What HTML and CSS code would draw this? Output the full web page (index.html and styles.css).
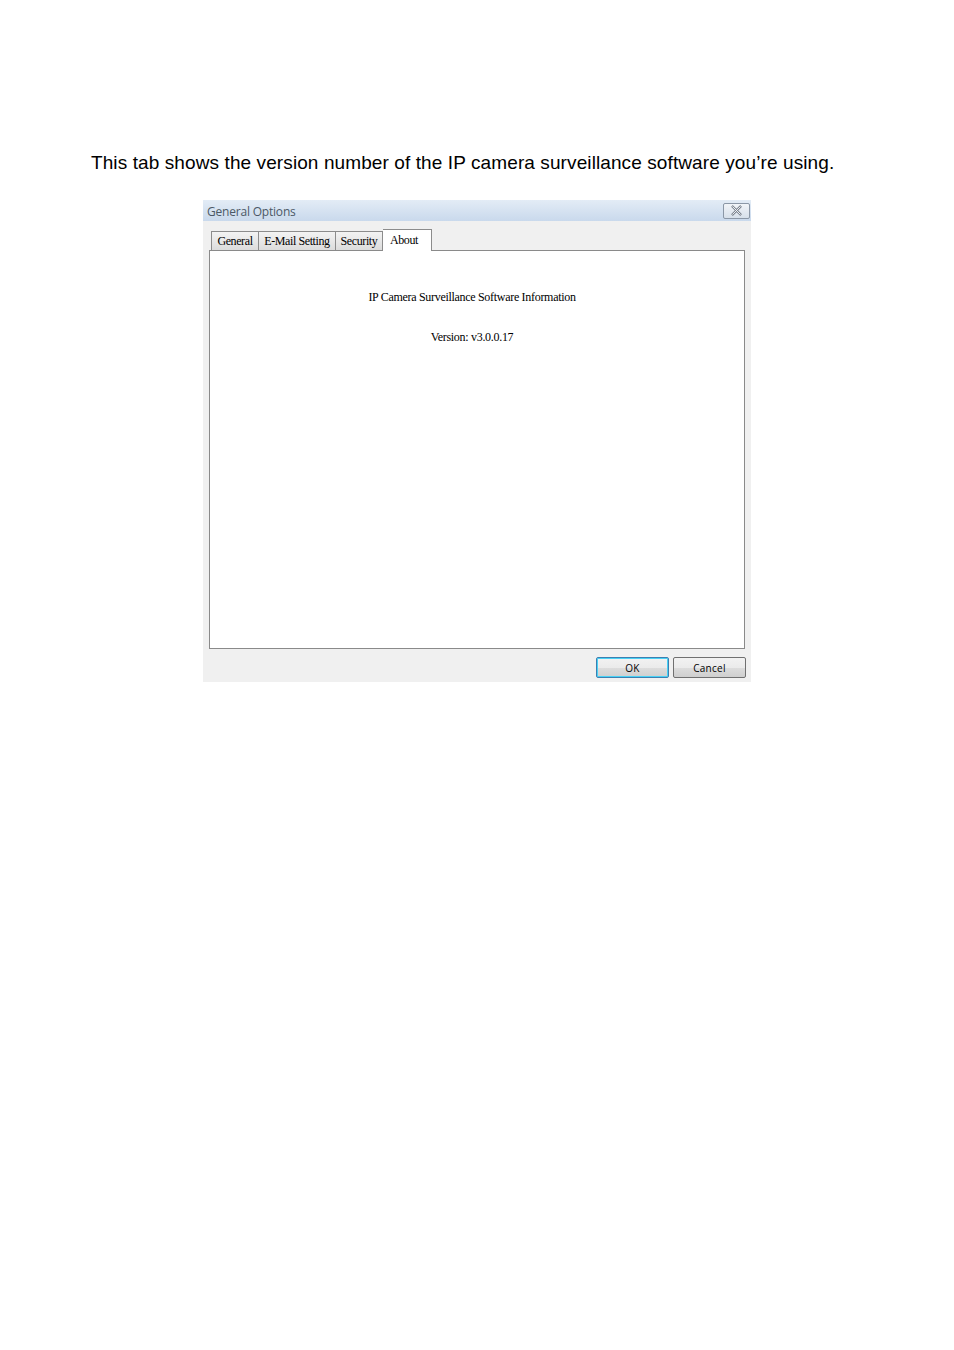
FILE: index.html
```html
<!DOCTYPE html>
<html>
<head>
<meta charset="utf-8">
<link rel="stylesheet" href="styles.css">
</head>
<body>
<div class="page">
  <p class="intro">This tab shows the version number of the IP camera surveillance software you’re using.</p>
  <div class="dialog">
    <div class="titlebar">
      <span class="title">General Options</span>
      <span class="close">
        <svg width="27" height="15" viewBox="0 0 27 15">
          <path d="M9.5 3.5 L17.5 11.5 M17.5 3.5 L9.5 11.5" stroke="#7d8590" stroke-width="2.6" stroke-linecap="square"/>
          <path d="M9.5 3.5 L17.5 11.5 M17.5 3.5 L9.5 11.5" stroke="#f4f6f8" stroke-width="1" stroke-linecap="square"/>
        </svg>
      </span>
    </div>
    <div class="body">
      <div class="tabs">
        <span class="tab t-general">General</span>
        <span class="tab t-mail">E-Mail Setting</span>
        <span class="tab t-sec">Security</span>
        <span class="tab active">About</span>
      </div>
      <div class="panel">
        <p class="info">IP Camera Surveillance Software Information</p>
        <p class="info ver">Version: v3.0.0.17</p>
      </div>
      <div class="buttons">
        <span class="btn focus">OK</span>
        <span class="btn">Cancel</span>
      </div>
    </div>
  </div>
</div>
</body>
</html>
```
FILE: styles.css
```css
html, body { margin: 0; padding: 0; background: #fff; }
.page { width: 954px; height: 1350px; position: relative; }
.intro {
  margin: 0;
  padding: 151px 0 0 91px;
  font-family: "Liberation Sans", Arial, sans-serif;
  font-size: 19px;
  letter-spacing: 0.1px;
  line-height: 23px;
  color: #000;
}
.dialog {
  margin: 26px 0 0 203px;
  width: 548px;
  height: 482px;
  background: #f0f0f0;
  display: flex;
  flex-direction: column;
}
.titlebar {
  height: 21px;
  background: linear-gradient(#e3ecf6, #c9d9ec);
  display: flex;
  align-items: center;
  justify-content: space-between;
  padding: 0 1px 0 4px;
}
.title {
  font-family: "Open Sans", "DejaVu Sans", sans-serif;
  font-size: 12px;
  color: #4b5866;
  letter-spacing: -0.2px;
  position: relative;
  top: 1px;
}
.close {
  width: 25px;
  height: 14px;
  border: 1px solid #8b97a6;
  border-radius: 2px;
  background: linear-gradient(#f1f4f8, #d7e0ea);
  display: flex;
  align-items: center;
  justify-content: center;
  overflow: hidden;
}
.body { padding: 7px 6px 0 6px; flex: 1; display: flex; flex-direction: column; }
.tabs { display: flex; align-items: flex-end; padding-left: 2px; height: 22px; position: relative; z-index: 1; }
.tab {
  box-sizing: border-box;
  font-family: "Liberation Serif", "Times New Roman", serif;
  font-size: 12px;
  letter-spacing: -0.4px;
  color: #000;
  height: 19px;
  line-height: 19px;
  text-align: center;
  white-space: nowrap;
  border: 1px solid #8c8c8c;
  border-bottom: none;
  border-right: none;
  background: linear-gradient(#f3f3f3, #dcdcdc);
}
.t-general { width: 47px; }
.t-mail { width: 77px; }
.t-sec { width: 48px; border-right: 1px solid #8c8c8c; }
.tab.active {
  width: 49px;
  background: #fff;
  height: 22px;
  line-height: 20px;
  text-align: left;
  padding-left: 7px;
  border-left: none;
  border-right: 1px solid #8c8c8c;
  border-top: 1px solid #8c8c8c;
  margin-bottom: -1px;
}
.panel {
  height: 397px;
  background: #fff;
  border: 1px solid #8a8a8a;
  text-align: center;
}
.info {
  margin: 0;
  font-family: "Liberation Serif", "Times New Roman", serif;
  font-size: 12px;
  color: #000;
  letter-spacing: -0.3px;
  position: relative;
  left: -5px;
}
.info:first-child { margin-top: 39px; }
.ver { margin-top: 25px; }
.buttons { display: flex; justify-content: flex-end; gap: 4px; margin-top: 8px; margin-right: -1px; }
.btn {
  width: 71px;
  height: 19px;
  border: 1px solid #707070;
  border-radius: 2px;
  background: linear-gradient(#f2f2f2 0%, #ebebeb 50%, #dddddd 51%, #cfcfcf 100%);
  font-family: "Open Sans", "DejaVu Sans", sans-serif;
  font-size: 10px;
  letter-spacing: 0.3px;
  line-height: 20px;
  text-align: center;
  color: #000;
}
.btn.focus {
  border-color: #3c7fb1;
  box-shadow: inset 0 0 0 1px #48d1f5;
}
```
